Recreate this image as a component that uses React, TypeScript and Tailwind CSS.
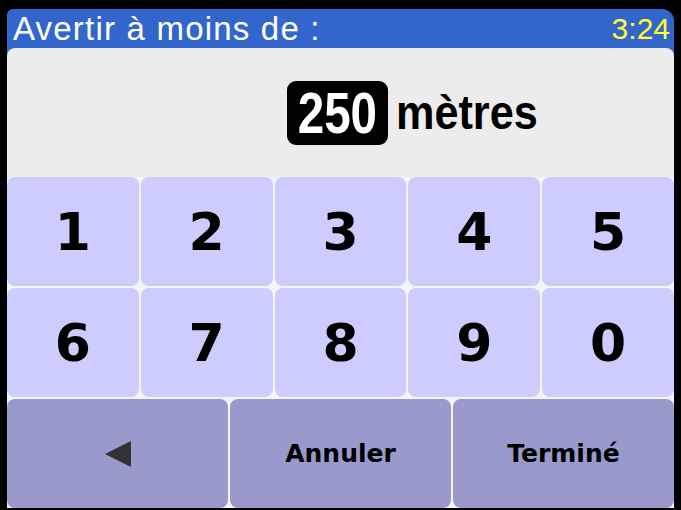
import { useState } from "react";

const digits = ["1", "2", "3", "4", "5", "6", "7", "8", "9", "0"];

export default function App() {
  const [value, setValue] = useState("250");

  const press = (d: string) => {
    setValue((v) => (v.length >= 4 ? v : v === "0" ? d : v + d));
  };

  return (
    <div className="h-[510px] w-[681px] bg-black pl-[7px] pt-[9px] font-['Liberation_Sans',Arial,sans-serif]">
      <div className="flex h-[499px] w-[667px] flex-col overflow-hidden rounded-tl-[6px] rounded-tr-[12px] bg-[#3366cc]">
        {/* title bar */}
        <div className="flex h-[39px] items-center justify-between pl-[6px] pr-[4px]">
          <span className="text-[33px] leading-none tracking-[1.2px] text-white">
            Avertir à moins de :
          </span>
          <span className="text-[30px] leading-none text-[#ffff33]">3:24</span>
        </div>

        <div className="flex flex-1 flex-col rounded-t-[8px] bg-[#ececec]">
          {/* current value */}
          <div className="flex h-[129px] items-center pl-[280px]">
            <div className="flex h-[64px] w-[101px] items-center justify-center rounded-[9px] bg-black">
              <span className="inline-block scale-x-[0.82] text-[58px] font-bold leading-none text-white">
                {value}
              </span>
            </div>
            <span className="ml-[8px] inline-block origin-left scale-x-[0.9] text-[48px] font-bold leading-none text-black">
              mètres
            </span>
          </div>

          {/* keypad */}
          <div className="grid flex-1 grid-cols-5 grid-rows-[109px_109px] gap-[2px] bg-[#f4f4f4]">
            {digits.map((d) => (
              <button
                key={d}
                onClick={() => press(d)}
                className="flex items-center justify-center rounded-[8px] bg-[#ccccff] font-['DejaVu_Sans',Verdana,sans-serif] text-[52px] font-bold text-black"
              >
                {d}
              </button>
            ))}
          </div>
          <div className="grid h-[111px] grid-cols-3 gap-[2px] bg-[#f4f4f4] pt-[2px]">
            <button
              onClick={() => setValue((v) => v.slice(0, -1))}
              className="flex items-center justify-center rounded-[8px] bg-[#9999cc]"
            >
              <svg width="26" height="26" viewBox="0 0 26 26">
                <path d="M26 0 L0 13 L26 26 Z" fill="#333333" />
              </svg>
            </button>
            <button className="flex items-center justify-center rounded-[8px] bg-[#9999cc] font-['DejaVu_Sans',Verdana,sans-serif] text-[25px] font-bold text-black">
              Annuler
            </button>
            <button className="flex items-center justify-center rounded-[8px] bg-[#9999cc] font-['DejaVu_Sans',Verdana,sans-serif] text-[25px] font-bold text-black">
              Terminé
            </button>
          </div>
        </div>
      </div>
    </div>
  );
}
